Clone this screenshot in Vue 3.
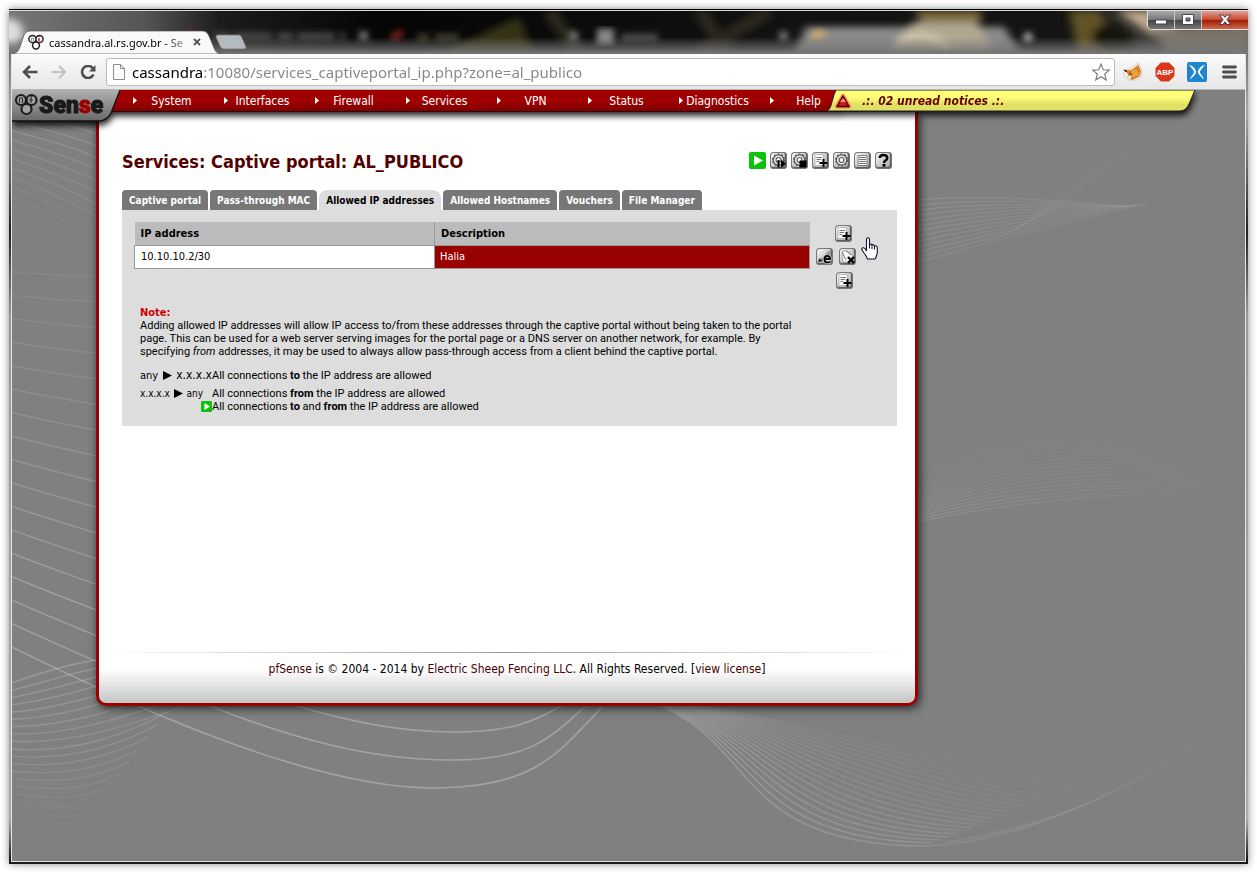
<script setup>
import { ref } from 'vue'

const url = ref('cassandra:10080/services_captiveportal_ip.php?zone=al_publico')
const menu = ['System', 'Interfaces', 'Firewall', 'Services', 'VPN', 'Status', 'Diagnostics', 'Help']
const tabs = ['Captive portal', 'Pass-through MAC', 'Allowed IP addresses', 'Allowed Hostnames', 'Vouchers', 'File Manager']
const active = ref('Allowed IP addresses')
const rows = [{ ip: '10.10.10.2/30', description: 'Halia' }]
const actions = [
  { kind: 'restart', label: 'Restart service' },
  { kind: 'stop', label: 'Stop service' },
  { kind: 'add', label: 'Add' },
  { kind: 'settings', label: 'Settings' },
  { kind: 'log', label: 'Log' },
  { kind: 'help', label: 'Help' }
]

// Each family blends from curve a to curve b in n steps; o is the opacity at both ends.
const families = [
  { n: 17, o: [0.06, 0.3], a: [12, 272, 40, 274, 70, 276, 96, 276], b: [12, 647, 40, 661, 68, 674, 96, 687] },
  { n: 12, o: [0.16, 0.03], a: [12, 112, 40, 118, 70, 124, 96, 134], b: [12, 215, 40, 228, 70, 244, 96, 262] },
  { n: 9, o: [0.2, 0.14], a: [12, 683, 40, 673, 70, 664, 96, 660], b: [12, 741, 70, 745, 130, 725, 185, 706] },
  { n: 10, o: [0.14, 0.02], a: [12, 749, 70, 753, 120, 738, 168, 712], b: [12, 815, 40, 822, 60, 832, 80, 824] },
  { n: 20, o: [0.24, 0.06], a: [650, 702, 760, 740, 730, 845, 925, 846], b: [690, 702, 790, 722, 930, 756, 1075, 788] },
  { n: 6, o: [0.2, 0.02], a: [925, 846, 1010, 842, 1100, 810, 1232, 715], b: [1030, 825, 1080, 805, 1150, 785, 1210, 740] },
  { n: 13, o: [0.2, 0.14], a: [918, 200, 980, 194, 1060, 200, 1125, 207], b: [918, 262, 990, 242, 1070, 222, 1150, 203] },
  { n: 9, o: [0.02, 0.08], a: [1040, 215, 1090, 190, 1140, 150, 1180, 120], b: [990, 240, 1030, 230, 1060, 190, 1090, 170] },
  { n: 18, o: [0.2, 0.03], a: [918, 522, 990, 506, 1090, 494, 1220, 490], b: [918, 476, 1000, 440, 1090, 410, 1240, 468] }
]
const strands = families.flatMap(({ n, o, a, b }) =>
  Array.from({ length: n }, (_, i) => {
    const t = i / (n - 1)
    const p = a.map((v, k) => Math.round((v + (b[k] - v) * t) * 10) / 10)
    return { d: `M${p[0]} ${p[1]}C${p.slice(2).join(' ')}`, o: o[0] + (o[1] - o[0]) * t }
  })
)
const swoops = [
  'M96 687C200 735 340 790 440 788S560 750 605 704',
  'M205 704C290 738 370 760 450 760S548 740 588 704',
  'M290 704C350 722 400 732 455 732S535 722 564 704'
]
</script>

<template>
  <div class="desktop">
    <div class="window">
      <header class="titlebar">
        <svg class="glass" viewBox="0 0 1239 44" preserveAspectRatio="none" aria-hidden="true">
          <defs>
            <filter id="soft" x="-20%" y="-60%" width="140%" height="220%"><feGaussianBlur stdDeviation="4" /></filter>
            <filter id="softer"><feGaussianBlur stdDeviation="3" /></filter>
            <linearGradient id="base" x1="0" x2="1" y1="0" y2="0">
              <stop offset="0" stop-color="#777" /><stop offset=".11" stop-color="#555" /><stop offset=".17" stop-color="#1c1c1c" />
              <stop offset=".3" stop-color="#050505" /><stop offset=".6" stop-color="#111" /><stop offset=".85" stop-color="#161412" /><stop offset="1" stop-color="#6c6862" />
            </linearGradient>
            <linearGradient id="haze" x1="0" x2="0" y1="0" y2="1">
              <stop offset=".6" stop-color="#777" stop-opacity="0" /><stop offset="1" stop-color="#777" />
            </linearGradient>
          </defs>
          <rect width="1239" height="44" fill="url(#base)" />
          <g filter="url(#soft)">
            <circle cx="0" cy="22" r="14" fill="#ddd" />
            <path d="M430 44L510 6L525 44z" fill="#343018" />
            <path d="M540 0L570 44M690 0L720 44M760 0L690 44" stroke="#2c261c" stroke-width="14" />
            <path d="M785 44L797 16H995L1012 44z" fill="#8b8b8b" />
            <path d="M878 44L900 14L925 6H965L985 44z" fill="#b0a791" />
            <path d="M905 0H972V12H915z" fill="#7d6d3c" />
            <path d="M890 34C905 20 930 24 940 44" fill="none" stroke="#d4c9ae" stroke-width="7" />
            <path d="M1060 0H1090L1110 44H1070z" fill="#625326" />
            <path d="M1108 0L1170 44H1210L1140 0z" fill="#bba88d" />
            <ellipse cx="1103" cy="28" rx="20" ry="16" fill="#16130e" />
            <path d="M1140 18H1239V44H1160z" fill="#7b756c" />
          </g>
          <g filter="url(#softer)">
            <rect x="176" y="20" width="12" height="12" fill="#5b2826" /><path d="M205 26H336" stroke="#505050" stroke-width="7" stroke-dasharray="16 4 38 5" />
            <rect x="350" y="21" width="9" height="9" fill="#777" />
            <path d="M382 28L394 22" stroke="#82201e" stroke-width="7" /><path d="M408 27H460" stroke="#44412f" stroke-width="7" stroke-dasharray="12 6 24" />
            <rect x="560" y="21" width="9" height="9" fill="#777" />
            <rect x="588" y="18" width="17" height="17" fill="#868686" /><path d="M612 27H649" stroke="#555" stroke-width="7" />
            <rect x="770" y="21" width="9" height="9" fill="#777" />
            <path d="M802 26C806 16 814 20 819 25L803 30z" fill="#d5aa6a" /><circle cx="1019" cy="27" r="5" fill="#aaa" />
          </g>
          <rect width="1239" height="44" fill="url(#haze)" />
        </svg>

        <div class="browser-tab">
          <svg class="tab-shape" viewBox="0 0 210 24" preserveAspectRatio="none" aria-hidden="true">
            <path d="M0 24C6 23 7 20 9 14L12 5Q14 1 18 1H191Q195 1 197 6L202 18Q204 24 210 24z" fill="#f9f9f9" stroke="#555" stroke-width=".7" />
          </svg>
          <svg class="favicon" viewBox="0 0 16 16" aria-hidden="true">
            <g fill="#fff" stroke="#222" stroke-width="1.5"><circle cx="4.5" cy="5" r="3.6" /><circle cx="11.5" cy="5" r="3.6" /><circle cx="8" cy="11.5" r="3.4" /></g>
            <path d="M11 4v3M11 2v1" stroke="#900" stroke-width="1.2" /><path d="M3.5 7V4h2v3" fill="none" stroke="#777" stroke-width=".8" />
          </svg>
          <span class="tab-title">cassandra.al.rs.gov.br - Se</span>
          <button class="tab-close" aria-label="Close tab"><svg viewBox="0 0 8 8"><path d="M1 1L7 7M7 1L1 7" stroke="#555" stroke-width="1.8" /></svg></button>
        </div>
        <button class="new-tab" aria-label="New tab">
          <svg viewBox="0 0 32 16"><path d="M3 1H24Q26 1 27 4L31 13Q31 15 29 15H9Q6 15 5 12L1 3Q1 1 3 1z" fill="#b4bac0" stroke="#777" stroke-width=".8" /></svg>
        </button>
        <div class="window-buttons">
          <button aria-label="Minimize"><svg viewBox="0 0 14 12"><rect x="1.5" y="6" width="11" height="4" fill="#fff" stroke="#445" stroke-width="1" /></svg></button>
          <button aria-label="Maximize"><svg viewBox="0 0 14 12"><path fill-rule="evenodd" d="M1.500 .5H12.500V10.500H1.500zM5 4V7H9V4z" fill="#fff" stroke="#445" stroke-width="1" /></svg></button>
          <button class="close" aria-label="Close"><svg viewBox="0 0 14 12"><path d="M1.500 1H5L7 3.500L9 1H12.500L9 5.500L12.500 10.500H9L7 7.700L5 10.500H1.500L5 5.500z" fill="#fff" stroke="#534" stroke-width="1" /></svg></button>
        </div>
      </header>

      <div class="client">
        <div class="toolbar">
          <button class="nav-button" aria-label="Back"><svg viewBox="0 0 16 14"><path d="M8 1L2 7L8 13M2.500 7H15.500" fill="none" stroke="#4d4d4d" stroke-width="2.500" /></svg></button>
          <button class="nav-button" aria-label="Forward"><svg viewBox="0 0 16 14"><path d="M8 1L14 7L8 13M13.500 7H.5" fill="none" stroke="#c2c2c2" stroke-width="2" /></svg></button>
          <button class="nav-button" aria-label="Reload"><svg viewBox="0 0 16 14"><path d="M13 3.500A6 6 0 1 0 13.500 9.500" fill="none" stroke="#4d4d4d" stroke-width="2.600" /><path d="M15.500 0V6.500H9z" fill="#4d4d4d" /></svg></button>
          <form class="omnibox" @submit.prevent>
            <svg class="page-icon" viewBox="0 0 12 16" aria-hidden="true"><path d="M.5 .5H7.500L11.500 4.500V15.500H.5zM7.500 .5V4.500H11.500" fill="#fdfdfd" stroke="#8d8d8d" /></svg>
            <input v-model="url" class="address" type="text" aria-label="Address">
            <button class="star" aria-label="Bookmark this page"><svg viewBox="0 0 18 18"><path d="M9 1L11.300 6.700L17.300 7.100L12.700 11L14.200 17L9 13.700L3.800 17L5.300 11L.7 7.100L6.700 6.700z" fill="#fff" stroke="#777" stroke-width="1.100" /></svg></button>
          </form>
          <button class="ext" aria-label="Fox extension"><svg viewBox="0 0 20 20"><path d="M0 8L6 7L13 3L14.500 .5L17 4L19 9L18 15L14 18H7L2 15z" fill="#fff" stroke="#c9c1b4" stroke-width=".8" /><path d="M1 8.500L8 8L14 4L15 2L18 9L17 14L14 16L9 18L4 15L5 12z" fill="#d9832a" /><path d="M8 9L13 7L17 13L10 15z" fill="#eb9f45" /><path d="M1 8L4 9L3 10zM6 11L9 12.500" stroke="#622" /><path d="M4 14L9 14L7 17z" fill="#fff" /></svg></button>
          <button class="ext" aria-label="Adblock Plus"><svg viewBox="0 0 20 20"><path d="M6 .5H14L19.500 6V14L14 19.500H6L.5 14V6z" fill="#d8371b" /><text class="abp" x="10" y="13" text-anchor="middle">ABP</text></svg></button>
          <button class="ext" aria-label="Shortcut extension"><svg viewBox="0 0 20 20"><rect width="20" height="20" rx="2" fill="#1f86cd" /><path d="M2 2.500C6 4 9 7 9 10C9 12 6 15 3 17.500C4 14 7 12 7 10S4 6 2 2.500zM18 2.500C14 4 11 7 11 10C11 12 14 15 17 17.500C16 14 13 12 13 10S16 6 18 2.500z" fill="#fff" /></svg></button>
          <button class="ext" aria-label="Menu"><svg viewBox="0 0 20 20"><path d="M4.500 5H16.500M4.500 10H16.500M4.500 15H16.500" stroke="#4d4d4d" stroke-width="2.800" stroke-linecap="round" /></svg></button>
        </div>

        <div class="page">
          <svg class="backdrop" viewBox="12 90 1234 771" preserveAspectRatio="xMinYMin slice" aria-hidden="true">
            <defs>
              <linearGradient id="fade" x1="0" x2="1" y1="0" y2="0">
                <stop offset=".55" stop-color="#fff" /><stop offset=".73" stop-color="#999" /><stop offset=".88" stop-color="#444" /><stop offset=".98" stop-color="#000" />
              </linearGradient>
              <mask id="dim" maskUnits="userSpaceOnUse" x="12" y="90" width="1234" height="771"><rect x="12" y="90" width="1234" height="771" fill="url(#fade)" /></mask>
            </defs>
            <g fill="none" stroke="#fff" stroke-width="1.300" mask="url(#dim)">
              <path v-for="(s, i) in strands" :key="i" :d="s.d" :stroke-opacity="s.o" />
              <path v-for="d in swoops" :key="d" :d="d" stroke-opacity=".28" stroke-width="1.600" />
            </g>
          </svg>

          <header class="topbar">
            <a class="logo" href="#" aria-label="pfSense">
              <svg viewBox="0 0 108 32" aria-hidden="true">
                <defs><linearGradient id="plate" x1="0" x2="0" y1="0" y2="1"><stop offset="0" stop-color="#b0b0b0" /><stop offset="1" stop-color="#686868" /></linearGradient></defs>
                <path d="M0 0H108L99 23Q95 31 86 31H0z" fill="url(#plate)" /><path d="M108 0L99 23Q95 31 86 31H0" fill="none" stroke="#111" stroke-width="1.300" />
                <g fill="#a4a4a4" stroke="#1c1c1c" stroke-width="2.200"><circle cx="9" cy="10" r="5" /><circle cx="19.500" cy="10" r="5" /><circle cx="14.500" cy="19" r="5" /></g>
                <path d="M7.500 13V8h3v5M19 13V8q0-2 2-2M17 10h4" fill="none" stroke="#333" stroke-width="1.200" />
                <text class="wordmark" x="27" y="23">Sen<tspan class="mark">s</tspan>e</text>
              </svg>
            </a>
            <nav class="menu">
              <a v-for="item in menu" :key="item" href="#">
                <svg viewBox="0 0 4 7" aria-hidden="true"><path d="M0 0L4 3.500L0 7z" fill="#fff" /></svg><span>{{ item }}</span>
              </a>
            </nav>
            <a class="notices" href="#">
              <svg class="banner" viewBox="0 0 369 22" preserveAspectRatio="none" aria-hidden="true">
                <defs><linearGradient id="lemon" x1="0" x2="0" y1="0" y2="1"><stop offset=".35" stop-color="#fffe78" /><stop offset=".7" stop-color="#e0df66" /></linearGradient></defs>
                <path d="M9 0H368L362 14Q359 21 353 21H0Q3 20 5 12Q7 4 9 0z" fill="url(#lemon)" stroke="#222" stroke-width="1" />
              </svg>
              <svg class="alert" viewBox="0 0 16 15" aria-hidden="true"><path d="M8 2L14 12.500H2z" fill="#e02020" stroke="#fa7a42" stroke-width="4" stroke-linejoin="round" /><path d="M8 2L14 12.500H2z" fill="#d51616" stroke="#3a0000" stroke-width="1.300" stroke-linejoin="round" /><path d="M8 4L11 8H5z" fill="#f88" /></svg>
              <span>.:. 02 unread notices .:.</span>
            </a>
          </header>

          <main class="panel">
            <div class="heading">
              <h1>Services: Captive portal: AL_PUBLICO</h1>
              <div class="actions">
                <span class="running"><svg viewBox="0 0 17 17" role="img" aria-label="Running"><rect width="17" height="17" rx="2" fill="#0ac30a" /><path d="M5 3.500L14 8.500L5 13.500z" fill="#fff" /></svg></span>
                <button v-for="a in actions" :key="a.kind" class="icon" :aria-label="a.label">
                  <svg viewBox="0 0 17 17">
                    <template v-if="a.kind === 'log'"><path d="M4 3.500H13V13.500H4z" fill="#f6f6f6" stroke="#666" stroke-width=".8" /><path d="M5 5.500H12M5 7.500H12M5 9.500H12M5 11.500H12" stroke="#666" stroke-width=".9" /></template>
                    <template v-else-if="a.kind === 'add'"><path d="M3 2.500H11.500V13.500H3z" fill="#fafafa" stroke="#999" stroke-width=".6" /><path d="M4.500 5.500H10M4.500 7.500H9M4.500 9.500H7" stroke="#777" /><path d="M11.500 7V15M7.500 11H15.500" stroke="#000" stroke-width="2" /></template>
                    <template v-else-if="a.kind === 'help'"><path d="M4.700 6Q5 3 8.500 3T12.300 6Q12.300 7.500 10.500 8.500Q9 9.300 9 11" fill="none" stroke="#000" stroke-width="2.500" /><rect x="7.500" y="12" width="3" height="2.600" /></template>
                    <template v-else>
                      <circle cx="8.500" cy="8" r="5.200" fill="#f2f2ee" stroke="#555" stroke-width="1.200" /><circle cx="8.500" cy="8" r="5.900" fill="none" stroke="#555" stroke-width="1.200" stroke-dasharray="2 1.700" /><circle cx="8.500" cy="8" r="2.500" fill="#fff" stroke="#555" stroke-width="1.200" />
                      <template v-if="a.kind === 'restart'"><path d="M8.500 8V15.500" stroke="#000" stroke-width="2" /><path d="M11 7.500V16L16 11.700z" /></template>
                      <rect v-if="a.kind === 'stop'" x="8.500" y="8.500" width="7" height="7" />
                    </template>
                  </svg>
                </button>
              </div>
            </div>

            <div class="tabs" role="tablist">
              <button v-for="t in tabs" :key="t" role="tab" :aria-selected="t === active" :class="{ active: t === active }" @click="active = t">{{ t }}</button>
            </div>

            <section class="content">
              <table class="addresses">
                <thead>
                  <tr>
                    <th class="ip" scope="col">IP address</th><th scope="col">Description</th>
                    <td class="tools"><div class="single"><button class="icon" aria-label="Add address"><svg viewBox="0 0 17 17"><path d="M3 2.500H11.500V13.500H3z" fill="#fafafa" stroke="#999" stroke-width=".6" /><path d="M4.500 5.500H10M4.500 7.500H9M4.500 9.500H7" stroke="#777" /><path d="M11.500 7V15M7.500 11H15.500" stroke="#000" stroke-width="2" /></svg></button></div></td>
                  </tr>
                </thead>
                <tbody>
                  <tr v-for="r in rows" :key="r.ip">
                    <td class="ip cell">{{ r.ip }}</td><td class="description">{{ r.description }}</td>
                    <td class="tools"><div>
                      <button class="icon" aria-label="Edit address"><svg viewBox="0 0 17 17"><path d="M2 14L12 3.500L15 2V9L9 14z" fill="#999" /><path d="M2 14L3.500 10L6.500 13z" fill="#222" /><path d="M8.500 11H14Q14 8 11.200 8T8.400 11.500Q8.500 14.500 11.500 14.500Q13.500 14.500 14.300 13.500" fill="none" stroke="#eee" stroke-width="3" /><path d="M8.500 11H14Q14 8 11.200 8T8.400 11.500Q8.500 14.500 11.500 14.500Q13.500 14.500 14.300 13.500" fill="none" stroke="#000" stroke-width="1.900" /></svg></button>
                      <button class="icon" aria-label="Delete address"><svg viewBox="0 0 17 17"><path d="M4 2.500L8 3L14 8L9 14H4L3 8z" fill="#fafaf4" stroke="#888" stroke-width=".7" /><path d="M7 2.500L12 7M3 4L7 12" stroke="#777" /><path d="M9 9L15 15M15 9L9 15" stroke="#000" stroke-width="2.300" /></svg></button>
                    </div></td>
                  </tr>
                </tbody>
                <tfoot>
                  <tr><td colspan="2"></td><td class="tools"><div class="single"><button class="icon" aria-label="Add another address"><svg viewBox="0 0 17 17"><path d="M3 2.500H11.500V13.500H3z" fill="#fafafa" stroke="#999" stroke-width=".6" /><path d="M4.500 5.500H10M4.500 7.500H9M4.500 9.500H7" stroke="#777" /><path d="M11.500 7V15M7.500 11H15.500" stroke="#000" stroke-width="2" /></svg></button></div></td></tr>
                </tfoot>
              </table>
              <svg class="pointer" viewBox="0 0 17 23" aria-hidden="true"><path d="M5.500 14V2.500Q5.500 .8 7 .8T8.500 2.500V7.500Q9.500 6.500 11 8Q12.500 7 13.500 8.700Q16.300 8.500 16.300 11V15Q16 19 14 22H6.500Q5.500 19 3 16L.8 12.500Q.6 10.500 2.500 10.700Q4 11 5.500 14z" fill="#fff" stroke="#111130" stroke-width="1.100" /><path d="M8.500 7.500V11.500M11 8V12M13.500 8.700V12.500" stroke="#111130" /></svg>

              <div class="note">
                <strong>Note:</strong>
                <p>Adding allowed IP addresses will allow IP access to/from these addresses through the captive portal without being taken to the portal<br>page. This can be used for a web server serving images for the portal page or a DNS server on another network, for example. By<br>specifying <em>from</em> addresses, it may be used to always allow pass-through access from a client behind the captive portal.</p>
                <dl>
                  <dt>any <svg viewBox="0 0 9 9" aria-label="to"><path d="M0 0L9 4.500L0 9z" /></svg> <span class="wide">x.x.x.x</span></dt><dd>All connections <b>to</b> the IP address are allowed</dd>
                  <dt class="small">x.x.x.x <svg viewBox="0 0 9 9" aria-label="to"><path d="M0 0L9 4.500L0 9z" /></svg> any</dt><dd class="lower">All connections <b>from</b> the IP address are allowed</dd>
                  <dt class="both"><svg viewBox="0 0 11 11" aria-label="both"><rect width="11" height="11" rx="1.500" fill="#0ac30a" /><path d="M3.500 2L9 5.500L3.500 9z" fill="#fff" /></svg></dt><dd>All connections <b>to</b> and <b>from</b> the IP address are allowed</dd>
                </dl>
              </div>
            </section>

            <footer class="footer"><a href="#">pfSense</a> is © 2004 - 2014 by <a href="#">Electric Sheep Fencing LLC</a>. All Rights Reserved. [<a href="#">view license</a>]</footer>
          </main>
        </div>
      </div>
    </div>
  </div>
</template>

<style>
body { margin: 0; background: #fff; }
</style>

<style scoped>
* { box-sizing: border-box; }
button { border: 0; padding: 0; background: none; font: inherit; }
svg { display: block; }
a { color: inherit; text-decoration: none; }

.desktop { display: flex; min-height: 100vh; padding: 9px 9px 8px; font-family: "DejaVu Sans Condensed", "DejaVu Sans", sans-serif; font-size: 11px; color: #000; }
.window { display: flex; flex: 1; flex-direction: column; min-width: 0; background: linear-gradient(#555, #a5a5a5 12%, #222 26%, #999 36%, #aaa 95%, #111); border-top: 1px solid #000; border-bottom: 2px solid #1a1a1a; box-shadow: 0 0 8px #888; }

.titlebar { position: relative; display: flex; align-items: flex-end; height: 44px; padding-left: 9px; border-top: 1px solid #ddd; overflow: hidden; }
.glass { position: absolute; inset: 0; width: 100%; height: 100%; }
.browser-tab { position: relative; display: flex; align-items: center; width: 202px; height: 24px; padding-left: 10px; font-family: "Noto Sans", sans-serif; font-size: 11px; }
.tab-shape { position: absolute; left: -6px; bottom: 0; width: 210px; height: 24px; }
.favicon { position: relative; flex: none; width: 16px; height: 16px; }
.tab-title { position: relative; flex: none; margin-left: 5px; white-space: nowrap; background: linear-gradient(90deg, #000 116px, #bbb 138px); background-clip: text; color: transparent; }
.tab-close { position: relative; flex: none; width: 8px; margin: 0 19px 0 auto; }
.new-tab { position: relative; width: 32px; margin: 0 0 4px -5px; }
.window-buttons { position: relative; display: flex; align-self: flex-start; height: 19px; margin-left: auto; border: 1px solid #ddd; border-top: 0; border-right: 0; border-radius: 0 0 0 5px; overflow: hidden; }
.window-buttons button { display: grid; place-items: center; width: 27px; border-right: 1px solid #ccc; background: linear-gradient(#aaa, #777 48%, #444 52%, #777); }
.window-buttons svg { width: 14px; height: 12px; }
.window-buttons .close { width: 46px; border: 0; background: linear-gradient(#e0a294, #c5482e 48%, #a01c08 52%, #d06a4c); }

.client { display: flex; flex: 1; flex-direction: column; margin: 0 2px; border: 1px solid #e4e4e4; border-top: 0; }
.toolbar { display: flex; align-items: center; height: 36px; padding: 0 6px 0 10px; background: linear-gradient(#fbfbfb, #e6e6e6); border-bottom: 1px solid #b5b5b5; }
.nav-button { width: 16px; margin-right: 13px; }
.nav-button + .omnibox { margin-left: -3px; }
.omnibox { display: flex; flex: 1; align-items: center; height: 28px; margin-right: 8px; padding: 0 4px 0 6px; border: 1px solid #bbb; border-radius: 3px; background: #fff; }
.page-icon { width: 12px; height: 16px; }
.address { flex: 1; min-width: 0; height: 26px; padding: 0 0 0 7px; border: 0; outline: 0; font: 15px "Noto Sans", sans-serif; background: linear-gradient(90deg, #000 77px, #858585 77px); background-clip: text; color: transparent; }
.star { width: 18px; }
.ext { width: 20px; margin-left: 12px; }
.omnibox + .ext { margin-left: 0; }
.abp { font: bold 8px "Liberation Sans", sans-serif; fill: #fff; }

.page { position: relative; flex: 1; background: #808080; overflow: hidden; }
.backdrop { position: absolute; inset: 0; width: 100%; height: 100%; }
.topbar { position: relative; z-index: 2; display: flex; height: 22px; filter: drop-shadow(1px 4px 3px rgba(0, 0, 0, .85)); font-size: 12px; }
.logo { position: relative; z-index: 1; width: 108px; height: 32px; }
.wordmark { font: 900 23px Roboto, "Liberation Sans", sans-serif; fill: #1a1a1a; stroke: #1a1a1a; stroke-width: 1px; }
.mark { fill: #900; stroke: #900; }
.menu { display: flex; gap: 18px; margin-left: -15px; padding-left: 28px; background: linear-gradient(#a00000 55%, #7c0000); border-bottom: 1px solid #300; color: #fff; }
.menu a { display: flex; align-items: center; width: 73px; }
.menu svg { width: 4px; height: 7px; }
.menu span { flex: 1; text-align: center; white-space: nowrap; }
.notices { position: relative; display: flex; align-items: center; width: 369px; height: 22px; margin-left: -16px; padding-left: 8px; color: #600; font-weight: bold; font-style: italic; }
.banner { position: absolute; inset: 0; width: 100%; height: 100%; }
.alert { position: relative; width: 16px; height: 15px; margin-right: 11px; }
.notices span { position: relative; white-space: nowrap; }

.panel { position: relative; display: flex; flex-direction: column; width: min(822px, 100% - 84px); min-height: 594px; margin-left: 84px; padding: 38px 18px 0 23px; border: 3px solid #900; border-top: 0; border-radius: 0 0 10px 10px; background: linear-gradient(to top, #c5c5c5, #fff 34px); box-shadow: 2px 2px 10px #222; }
.heading { display: flex; align-items: flex-start; justify-content: space-between; height: 24px; padding-right: 5px; }
h1 { margin: 0; color: #500; font-size: 18px; line-height: 24px; }
.actions { display: flex; gap: 4px; padding-top: 2px; }
.running, .icon { flex: none; width: 17px; height: 17px; }
.icon { border-radius: 4px; background: linear-gradient(135deg, #fff, #ccc 50%, #aaa); box-shadow: inset 0 0 0 1px #777, inset -1px -1px 1px 1px #555; }
.tabs { display: flex; gap: 2px; margin-top: 16px; }
.tabs button { height: 20px; padding: 0 7px; border-radius: 4px 4px 0 0; background: #777; color: #fff; font-weight: bold; font-size: 10px; white-space: nowrap; }
.tabs .active { border-radius: 8px 8px 0 0; background: #ddd; color: #000; }
.content { position: relative; min-height: 216px; padding: 12px; background: #ddd; }

.addresses { width: 100%; max-width: 722px; border-collapse: collapse; table-layout: fixed; }
.addresses tr { height: 23px; }
.addresses tfoot tr { height: 25px; }
.addresses th { padding: 0 6px; border-right: 1px solid #999; border-bottom: 1px solid #999; background: #bbb; text-align: left; font-size: 11px; }
.addresses th:nth-child(2) { border-right-color: #bbb; }
.addresses td { padding: 0; }
.addresses .ip { width: 300px; }
.addresses .cell { padding: 0 6px; border: 1px solid #999; background: #fff; }
.addresses .description { padding: 0 5px; border: 1px solid #999; background: #900; color: #fff; }
.addresses .tools { width: 46px; }
.tools div { display: flex; justify-content: flex-end; gap: 6px; }
.tools .single { padding-right: 3px; }
.pointer { position: absolute; left: 739px; top: 27px; width: 17px; height: 23px; }

.note { margin: 13px 6px 0; line-height: 13px; }
.note strong { display: block; color: #c00; font-size: 11px; }
.note p { margin: 0; white-space: nowrap; font-family: Roboto, sans-serif; }
dl { display: grid; grid-template-columns: 72px 1fr; margin: 11px 0 0; }
dt { display: flex; align-items: center; justify-content: space-between; white-space: nowrap; }
dt svg { width: 9px; height: 9px; }
.wide { font-size: 12px; }
dt.small { padding: 5px 9px 0 0; font-size: 10px; }
dt.both { justify-content: flex-end; }
dt.both svg { width: 11px; height: 11px; }
dd { margin: 0; font-family: Roboto, sans-serif; }
dd.lower { padding-top: 5px; }
.footer { margin: auto -18px 0 -23px; padding: 9px 0 26px 20px; border-top: 1px solid; border-image: linear-gradient(90deg, #fff, #999 50%, #fff) 1; text-align: center; font-size: 12px; line-height: 15px; }
.footer a { color: #400; }
</style>
